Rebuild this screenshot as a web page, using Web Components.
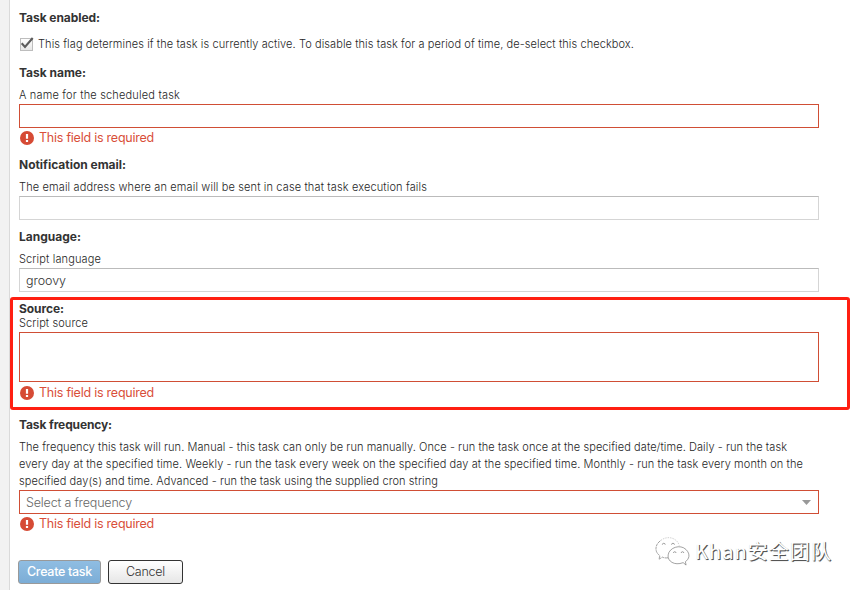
<!DOCTYPE html>
<html lang="en">
<head>
<meta charset="utf-8">
<title>Create task</title>
<style>
html,body{margin:0;height:100%;overflow:hidden;background:#fff}
body{font-family:Inter,"Noto Sans CJK SC",sans-serif;color:#333}
</style>
</head>
<body>
<task-page>
  <form-field style="margin-top:9px"><fit-text slot="label" w="81">Task enabled:</fit-text>
    <check-row style="margin-top:8px"><fit-text w="596">This flag determines if the task is currently active. To disable this task for a period of time, de-select this checkbox.</fit-text></check-row>
  </form-field>
  <form-field style="margin-top:11px"><fit-text slot="label" w="67">Task name:</fit-text><fit-text slot="hint" w="161">A name for the scheduled task</fit-text>
    <text-box invalid></text-box><error-note></error-note>
  </form-field>
  <form-field style="margin-top:8px"><fit-text slot="label" w="107">Notification email:</fit-text><fit-text slot="hint" w="408">The email address where an email will be sent in case that task execution fails</fit-text>
    <text-box></text-box>
  </form-field>
  <form-field style="margin-top:8px"><fit-text slot="label" w="62">Language:</fit-text><fit-text slot="hint" w="82">Script language</fit-text>
    <text-box><fit-text w="40">groovy</fit-text></text-box>
  </form-field>
  <red-frame>
    <form-field tight><fit-text slot="label" w="45">Source:</fit-text><fit-text slot="hint" w="69">Script source</fit-text>
      <text-box invalid style="height:50px"></text-box><error-note style="height:22px"></error-note>
    </form-field>
  </red-frame>
  <form-field style="margin-top:6px"><fit-text slot="label" w="93">Task frequency:</fit-text>
    <div slot="hint" style="padding-top:1px"><fit-text w="768">The frequency this task will run. Manual - this task can only be run manually. Once - run the task once at the specified date/time. Daily - run the task</fit-text><fit-text w="784">every day at the specified time. Weekly - run the task every week on the specified day at the specified time. Monthly - run the task every month on the</fit-text><fit-text w="419">specified day(s) and time. Advanced - run the task using the supplied cron string</fit-text></div>
    <text-box invalid select><fit-text w="106">Select a frequency</fit-text></text-box><error-note></error-note>
  </form-field>
  <button-bar>
    <push-button primary><fit-text w="65">Create task</fit-text></push-button>
    <push-button><fit-text w="39">Cancel</fit-text></push-button>
  </button-bar>
  <water-mark slot="overlay"></water-mark>
</task-page>
<script>
function define(name, html, init) {
  customElements.define(name, class extends HTMLElement {
    constructor() { super(); this.attachShadow({mode: 'open'}).innerHTML = html; }
    connectedCallback() { if (init) init(this); }
  });
}
define('task-page', `<style>
:host{display:flex;height:590px;position:relative;overflow:hidden}
aside{width:9px;background:#f2f2f2;border-right:1px solid #dadada;flex:none}
main{width:800px;padding-left:9px;display:flex;flex-direction:column}
</style><aside></aside><main><slot></slot></main><slot name="overlay"></slot>`);
define('form-field', `<style>
:host{display:flex;flex-direction:column}
.l{height:18px;line-height:18px;font-size:12px;font-weight:700;color:#333}
.h{font-size:11px;font-weight:350;color:#262626}
.h ::slotted(*){display:block;margin-top:4px;line-height:17px}
.h ::slotted(fit-text){height:18px;line-height:18px}
:host([tight]) .l{height:14px;line-height:14px;padding-top:2px}
:host([tight]) .h ::slotted(fit-text){margin-top:0;height:16px;line-height:14px}
</style><div class="l"><slot name="label"></slot></div><div class="h"><slot name="hint"></slot></div><slot></slot>`);
define('check-row', `<style>
:host{display:flex;align-items:center;height:18px;font-size:11px;font-weight:350;color:#262626}
svg{width:15px;height:16px;margin-right:4px;flex:none}
</style><svg viewBox="0 0 15 16"><defs><linearGradient id="g" x2="0" y2="1"><stop stop-color="#fff"/><stop offset="1" stop-color="#e6e6e6"/></linearGradient></defs><rect x="1.5" y="2.5" width="12" height="12" fill="url(#g)" stroke="#bdbdbd"/><path d="M2.7 7.3L6 11L13.7 2" fill="none" stroke="#5c5c5c" stroke-width="2.1"/></svg><slot></slot>`);
define('text-box', `<style>
:host{display:flex;align-items:center;justify-content:space-between;box-sizing:border-box;width:800px;height:24px;border:1px solid #d5d5d5;border-top-color:#bbb;background:#fff;padding:1px 7px 0 6px;font-size:12.5px;font-weight:350;color:#333}
:host([invalid]){border-color:#d04e35}
:host([select]){color:#666}
svg{display:none;width:9px;height:5px}
:host([select]) svg{display:block}
</style><slot></slot><svg viewBox="0 0 9 5"><path d="M0 0H9L4.5 5Z" fill="#999"/></svg>`);
define('error-note', `<style>
:host{display:flex;align-items:center;height:20px;font-size:12.5px;font-weight:400;color:#d94f3a}
svg{width:14px;height:14px;margin:0 5px 0 1px}
fit-text{padding-bottom:2px}
</style><svg viewBox="0 0 14 14"><circle cx="7" cy="7" r="7" fill="#d64b35"/><path d="M5.9 3H8.1V7.8H5.9ZM5.9 9H8.1V11H5.9Z" fill="#fff"/></svg><fit-text w="115">This field is required</fit-text>`);
define('red-frame', `<style>
:host{display:block;box-sizing:border-box;width:840px;height:113px;border:3px solid #ff1f12;border-radius:3px;margin:5px 0 0 -9px;padding-left:6px}
</style><slot></slot>`);
define('button-bar', `<style>:host{display:flex;gap:7px;margin:26px 0 0 -1px}</style><slot></slot>`);
define('push-button', `<style>
:host{display:flex;align-items:center;justify-content:center;box-sizing:border-box;width:75px;height:24px;padding-bottom:1px;border:1px solid #333;border-radius:3px;background:linear-gradient(#fff,#e6e6e6);font-size:12.5px;font-weight:350;color:#333}
:host([primary]){width:83px;border-color:#999;background:linear-gradient(#8fbde2,#7cadd6);color:#fff;font-weight:500}
</style><slot></slot>`);
define('water-mark', `<style>
:host{position:absolute;left:655px;top:533px;display:flex;align-items:center;height:36px;color:#fff;font:20px "Noto Sans CJK SC",sans-serif}
svg{width:35px;height:31px;margin-right:5px}
fit-text{text-shadow:1px 1px 0 #555,.5px .5px 1px #777;padding-bottom:1px}
</style><svg viewBox="0 0 36 32" fill="none" stroke="#777" stroke-width=".7"><path d="M13.5 22.5Q10 23 7.5 21.8L4 24L5 20.3C-1.5 16 .5 8 6 4.5" stroke-dasharray="3 .6"/><path d="M6 4.5C13-1 23 2 25 10" stroke="#bbb" stroke-dasharray="1.5 1"/><path d="M29 27.5C20 31 12.5 26 13.5 19.5C14.5 12 26 8 32 14C37 19 35 24 31.3 26.5L32 30Z" fill="#fff"/><path d="M7.5 9a1.5 1.5 0 0 1 3 0M17 9a1.5 1.5 0 0 1 3 0M19 17.5a1.3 1.3 0 0 1 2.6 0M27 17.5a1.3 1.3 0 0 1 2.6 0"/></svg><fit-text w="137">Khan安全团队</fit-text>`);
/* Spreads its line of text to the width given in "w". */
define('fit-text', `<style>:host{display:block;white-space:nowrap}span{display:inline-block}</style><span><slot></slot></span>`, el => {
  const span = el.shadowRoot.querySelector('span');
  const n = el.textContent.length;
  el.style.letterSpacing = ((+el.getAttribute('w') - span.getBoundingClientRect().width) / n).toFixed(3) + 'px';
});
</script>
</body>
</html>
